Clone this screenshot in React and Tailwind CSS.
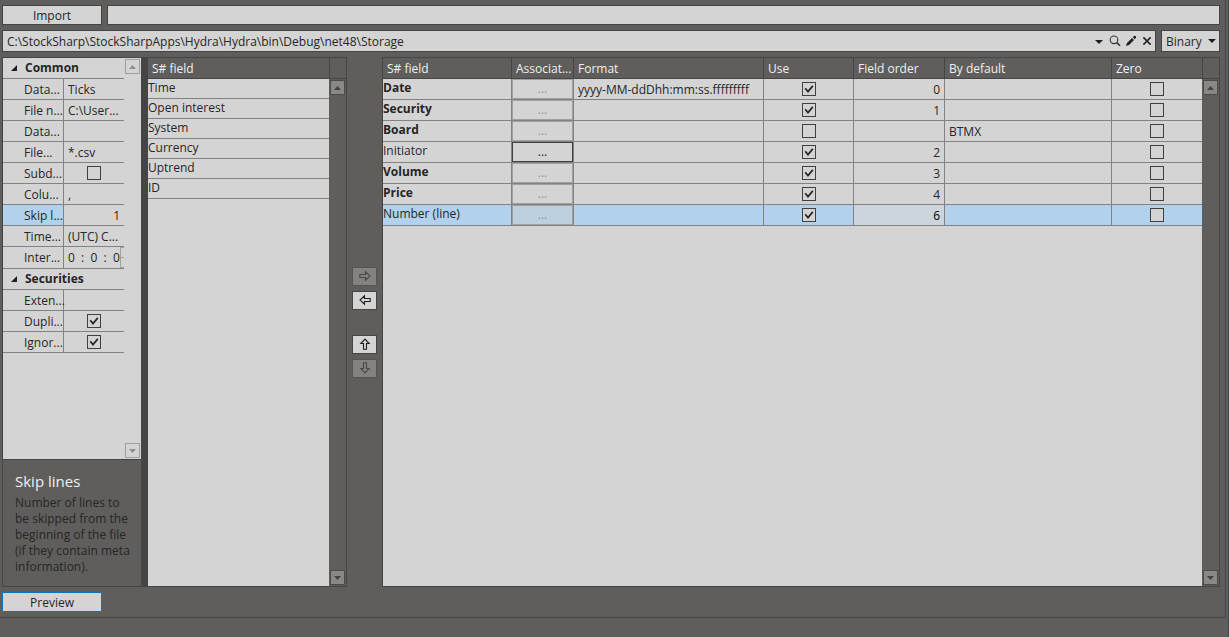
import React, { useState } from "react";

const availableFields = ["Time", "Open interest", "System", "Currency", "Uptrend", "ID"];

const mappedFields = [
  { name: "Date", required: true, format: "yyyy-MM-ddDhh:mm:ss.fffffffff", use: true, order: "0", def: "" },
  { name: "Security", required: true, format: "", use: true, order: "1", def: "" },
  { name: "Board", required: true, format: "", use: false, order: "", def: "BTMX" },
  { name: "Initiator", required: false, format: "", use: true, order: "2", def: "", canMap: true },
  { name: "Volume", required: true, format: "", use: true, order: "3", def: "" },
  { name: "Price", required: true, format: "", use: true, order: "4", def: "" },
  { name: "Number (line)", required: false, format: "", use: true, order: "6", def: "" },
];

const commonProps = [
  { id: "data-type", name: "Data...", value: "Ticks" },
  { id: "file-name", name: "File n...", value: "C:\\User..." },
  { id: "data-dir", name: "Data...", value: "" },
  { id: "file-mask", name: "File...", value: "*.csv" },
  { id: "subdirs", name: "Subd...", type: "check", value: false },
  { id: "column-sep", name: "Colu...", value: "," },
  { id: "skip-lines", name: "Skip l...", value: "1", right: true },
  { id: "time-zone", name: "Time...", value: "(UTC) C..." },
  { id: "interval", name: "Inter...", type: "interval", value: "0  :  0  :  0" },
];

const securityProps = [
  { id: "extended", name: "Exten...", value: "" },
  { id: "duplicates", name: "Dupli...", type: "check", value: true },
  { id: "ignore", name: "Ignor...", type: "check", value: true },
];

function CheckBox({ id, label, checked }) {
  return (
    <span className="relative block w-[14px] h-[14px] mx-auto">
      <input
        id={id}
        type="checkbox"
        aria-label={label}
        defaultChecked={checked}
        className="peer block w-full h-full appearance-none border border-[#404040] bg-[#d4d4d4]"
      />
      <svg
        viewBox="0 0 14 14"
        className="absolute inset-0 hidden peer-checked:block pointer-events-none"
        fill="none"
        stroke="#262626"
        strokeWidth="1.7"
      >
        <path d="M3.2 6.2 L6 9.6 L10.8 3.9" />
      </svg>
    </span>
  );
}

function ScrollButton({ dir, light }) {
  return (
    <button
      aria-label={dir === "up" ? "Scroll up" : "Scroll down"}
      className={
        light
          ? "flex items-center justify-center w-[15px] h-[15px] border border-[#a0a0a0] bg-[#d4d4d4] text-[#909090]"
          : "flex items-center justify-center w-[15px] h-[15px] border border-[#4b4b4a] bg-[#898887] text-[#434343]"
      }
    >
      <svg width="7" height="4" viewBox="0 0 7 4" fill="currentColor">
        <path d={dir === "up" ? "M0 4 L3.5 0 L7 4 Z" : "M0 0 L7 0 L3.5 4 Z"} />
      </svg>
    </button>
  );
}

function ArrowButton({ label, rotate, disabled }) {
  return (
    <button
      aria-label={label}
      disabled={disabled}
      className={
        disabled
          ? "flex items-center justify-center w-full h-[19px] border border-[#555453] bg-[#838281] text-[#484848]"
          : "flex items-center justify-center w-full h-[19px] border border-[#454545] bg-[#d4d4d4] text-[#1e1e1e]"
      }
    >
      <svg width="12" height="12" viewBox="0 0 12 12" fill="none" stroke="currentColor" strokeWidth="1.1">
        <path d="M0.8 4.5 H6.5 V1.8 L11 6 L6.5 10.2 V7.5 H0.8 Z" transform={`rotate(${rotate} 6 6)`} />
      </svg>
    </button>
  );
}

function CategoryRow({ title }) {
  return (
    <div className="flex items-center h-[21px] border-b border-[#828282]">
      <svg width="6" height="6" viewBox="0 0 6 6" fill="#1e1e1e" className="ml-2 mr-2">
        <path d="M6 0 V6 H0 Z" />
      </svg>
      <h2 className="font-bold leading-[22px]">{title}</h2>
    </div>
  );
}

function PropertyRow({ prop, selected, onSelect }) {
  return (
    <div className="flex border-b border-[#828282]" onClick={onSelect}>
      <label
        htmlFor={prop.id}
        className={
          selected
            ? "w-[61px] h-5 pl-[21px] leading-[22px] border-r border-[#828282] whitespace-nowrap bg-[#b1d1ec]"
            : prop.type === "interval"
              ? "w-[61px] h-[21px] pl-[21px] leading-[22px] border-r border-[#828282] whitespace-nowrap"
              : "w-[61px] h-5 pl-[21px] leading-[22px] border-r border-[#828282] whitespace-nowrap"
        }
      >
        {prop.name}
      </label>
      {prop.type === "check" && (
        <div className="flex flex-1 items-center">
          <CheckBox id={prop.id} label={prop.name} checked={prop.value} />
        </div>
      )}
      {prop.type === "interval" && (
        <div className="flex flex-1 h-[21px]">
          <input
            id={prop.id}
            defaultValue={prop.value}
            className="w-[56px] pl-1 bg-transparent outline-none"
          />
          <div className="flex flex-col w-1 border-l border-y border-[#a0a0a0]">
            <div className="flex-1 border-b border-[#a0a0a0]" />
            <div className="flex-1" />
          </div>
        </div>
      )}
      {!prop.type && (
        <input
          id={prop.id}
          defaultValue={prop.value}
          className={
            prop.right
              ? "w-[60px] h-5 px-1 text-right bg-transparent outline-none"
              : "w-[60px] h-5 pl-1 bg-transparent outline-none"
          }
        />
      )}
    </div>
  );
}

function PropertyPanel() {
  const [selected, setSelected] = useState("skip-lines");

  return (
    <div className="flex flex-col w-[138px]">
      <div className="flex flex-1 bg-[#d4d4d4]">
        <div className="w-[121px]">
          <CategoryRow title="Common" />
          {commonProps.map((p) => (
            <PropertyRow key={p.id} prop={p} selected={selected === p.id} onSelect={() => setSelected(p.id)} />
          ))}
          <CategoryRow title="Securities" />
          {securityProps.map((p) => (
            <PropertyRow key={p.id} prop={p} selected={selected === p.id} onSelect={() => setSelected(p.id)} />
          ))}
        </div>
        <div className="flex flex-col justify-between px-px py-px">
          <ScrollButton dir="up" light />
          <ScrollButton dir="down" light />
        </div>
      </div>
      <div className="h-[127px] border-t border-[#454545] px-3 pt-[10px]">
        <h3 className="text-[15px] leading-[22px] text-[#f0f0f0] mb-[3px]">Skip lines</h3>
        <p className="leading-4 whitespace-nowrap">
          Number of lines to
          <br />
          be skipped from the
          <br />
          beginning of the file
          <br />
          (if they contain meta
          <br />
          information).
        </p>
      </div>
    </div>
  );
}

function ScrollTrack() {
  return (
    <div className="flex flex-col w-[17px] shrink-0">
      <div className="h-[21px] border-l border-b border-[#454545]" />
      <div className="flex flex-1 flex-col justify-between items-center pt-px pb-px">
        <ScrollButton dir="up" />
        <ScrollButton dir="down" />
      </div>
    </div>
  );
}

function FieldsList() {
  return (
    <div className="flex flex-1">
      <div className="flex-1 bg-[#d4d4d4]">
        <table className="w-full table-fixed border-separate border-spacing-0">
          <thead>
            <tr className="h-[21px] bg-[#5f5e5c] text-[#f0f0f0]">
              <th className="p-0 pt-[2px] pl-1 text-left font-normal border-b border-[#454545]">S# field</th>
            </tr>
          </thead>
          <tbody>
            {availableFields.map((f) => (
              <tr key={f} className="h-5 leading-[18px]">
                <td className="p-0 align-top border-b border-[#828282]">{f}</td>
              </tr>
            ))}
          </tbody>
        </table>
      </div>
      <ScrollTrack />
    </div>
  );
}

const headClass =
  "p-0 pt-[2px] pl-1 text-left font-normal border-r border-b border-[#454545] whitespace-nowrap overflow-hidden";
const cellClass = "p-0 border-r border-b border-[#828282]";

function MappingTable() {
  return (
    <div className="flex flex-1 min-w-0 border border-[#454545]">
      <div className="flex-1 min-w-0 bg-[#d4d4d4]">
        <table className="w-full table-fixed border-separate border-spacing-0">
          <colgroup>
            <col className="w-[129px]" />
            <col className="w-[62px]" />
            <col />
            <col className="w-[90px]" />
            <col className="w-[91px]" />
            <col className="w-[167px]" />
            <col className="w-[90px]" />
          </colgroup>
          <thead>
            <tr className="h-[21px] bg-[#5f5e5c] text-[#f0f0f0]">
              <th className={headClass}>S# field</th>
              <th className={headClass}>Associat...</th>
              <th className={headClass}>Format</th>
              <th className={headClass}>Use</th>
              <th className={headClass}>Field order</th>
              <th className={headClass}>By default</th>
              <th className="p-0 pt-[2px] pl-1 text-left font-normal border-b border-[#454545]">Zero</th>
            </tr>
          </thead>
          <tbody>
            {mappedFields.map((f, i) => {
              const active = i === mappedFields.length - 1;
              return (
                <tr key={f.name} className={active ? "h-[21px] bg-[#b1d1ec]" : "h-[21px]"}>
                  <td className={cellClass + " align-top leading-[18px]" + (f.required ? " font-bold" : "")}>
                    {f.name}
                  </td>
                  <td className={cellClass}>
                    <button
                      disabled={!f.canMap}
                      aria-label={`${f.name} associations`}
                      className={
                        f.canMap
                          ? "block w-full h-5 border border-[#404040] leading-[18px]"
                          : active
                            ? "block w-full h-5 border border-[#a0a0a0] bg-[#bdd0df] text-[#909090] leading-[18px]"
                            : "block w-full h-5 border border-[#a0a0a0] text-[#909090] leading-[18px]"
                      }
                    >
                      ...
                    </button>
                  </td>
                  <td className={cellClass}>
                    <input
                      aria-label={`${f.name} format`}
                      defaultValue={f.format}
                      className="block w-full h-5 px-1 bg-transparent outline-none"
                    />
                  </td>
                  <td className={cellClass}>
                    <CheckBox label={`Use ${f.name}`} checked={f.use} />
                  </td>
                  <td className={active ? cellClass + " bg-[#ccd4dc] text-black" : cellClass}>
                    <input
                      aria-label={`${f.name} order`}
                      defaultValue={f.order}
                      className="block w-full h-5 px-1 text-right bg-transparent outline-none"
                    />
                  </td>
                  <td className={cellClass}>
                    <input
                      aria-label={`${f.name} default`}
                      defaultValue={f.def}
                      className="block w-full h-5 px-1 bg-transparent outline-none"
                    />
                  </td>
                  <td className="p-0 border-b border-[#828282]">
                    <CheckBox label={`${f.name} zero`} checked={false} />
                  </td>
                </tr>
              );
            })}
          </tbody>
        </table>
      </div>
      <ScrollTrack />
    </div>
  );
}

function PathBar() {
  return (
    <div className="flex gap-[5px] h-[22px]">
      <div className="flex flex-1 items-center border border-[#454545] bg-[#d4d4d4]">
        <input
          aria-label="Storage path"
          defaultValue="C:\StockSharp\StockSharpApps\Hydra\Hydra\bin\Debug\net48\Storage"
          className="flex-1 min-w-0 h-5 pl-1 bg-transparent outline-none"
        />
        <button aria-label="Open list" className="flex items-center justify-center w-4 h-5 pt-[2px]">
          <svg width="8" height="4" viewBox="0 0 8 4" fill="#1e1e1e">
            <path d="M0 0 H8 L4 4 Z" />
          </svg>
        </button>
        <button aria-label="Find" className="flex items-center justify-center w-4 h-5">
          <svg width="12" height="12" viewBox="0 0 12 12" fill="none" stroke="#333333">
            <circle cx="5" cy="4.8" r="3.8" strokeWidth="1.1" />
            <path d="M7.8 7.6 L11 10.8" strokeWidth="1.6" />
          </svg>
        </button>
        <button aria-label="Edit" className="flex items-center justify-center w-4 h-5">
          <svg width="12" height="12" viewBox="0 0 12 12" fill="#1e1e1e">
            <path d="M1 11 L2 8 L7 3 L9 5 L4 10 Z" />
            <path d="M7.8 2.2 L9 1 Q10 0.6 10.8 1.3 Q11.3 2 10.9 3 L9.8 4.2 Z" />
          </svg>
        </button>
        <button aria-label="Clear" className="flex items-center justify-center w-4 h-5">
          <svg width="10" height="10" viewBox="0 0 10 10" fill="none" stroke="#262626" strokeWidth="1.6">
            <path d="M1.4 1.4 L8.6 8.6 M8.6 1.4 L1.4 8.6" />
          </svg>
        </button>
      </div>
      <div className="relative w-[59px] border border-[#454545] bg-[#d4d4d4]">
        <select aria-label="Storage format" className="block w-full h-5 pt-[2px] pl-1 appearance-none outline-none">
          <option>Binary</option>
          <option>CSV</option>
        </select>
        <svg
          width="8"
          height="4"
          viewBox="0 0 8 4"
          fill="#1e1e1e"
          className="absolute right-[3px] top-2 pointer-events-none"
        >
          <path d="M0 0 H8 L4 4 Z" />
        </svg>
      </div>
    </div>
  );
}

function App() {
  return (
    <div className="flex min-h-screen bg-[#5f5e5c] border-r border-[#454545] pr-[2px] pb-[19px] font-['Open_Sans','Noto_Sans',sans-serif] text-[12px] leading-4 text-[#262626]">
      <main className="flex flex-1 min-w-0 flex-col gap-[5px] pt-[5px] pb-[5px] pl-[2px] pr-[5px] border-r border-b border-[#454545]">
        <div className="flex gap-[5px] h-5">
          <button className="w-[100px] pt-[2px] border border-[#454545] bg-[#d4d4d4]">Import</button>
          <div role="progressbar" aria-label="Import progress" className="flex-1 border border-[#454545] bg-[#d4d4d4]" />
        </div>

        <PathBar />

        <div className="flex flex-1 gap-[5px]">
          <div className="flex w-[345px] shrink-0 border border-[#454545]">
            <PropertyPanel />
            <div className="w-[7px] bg-[#454545]" />
            <FieldsList />
          </div>

          {/* move / reorder buttons */}
          <div className="flex flex-col justify-center w-[25px] shrink-0 gap-[5px]">
            <ArrowButton label="Add field" rotate={0} disabled />
            <ArrowButton label="Remove field" rotate={180} />
            <div className="h-[15px]" />
            <ArrowButton label="Move up" rotate={270} />
            <ArrowButton label="Move down" rotate={90} disabled />
          </div>

          <MappingTable />
        </div>

        <button className="w-[100px] h-5 pt-[2px] border border-[#0a74c4] bg-[#d4d4d4]">Preview</button>
      </main>
    </div>
  );
}

export default App;
